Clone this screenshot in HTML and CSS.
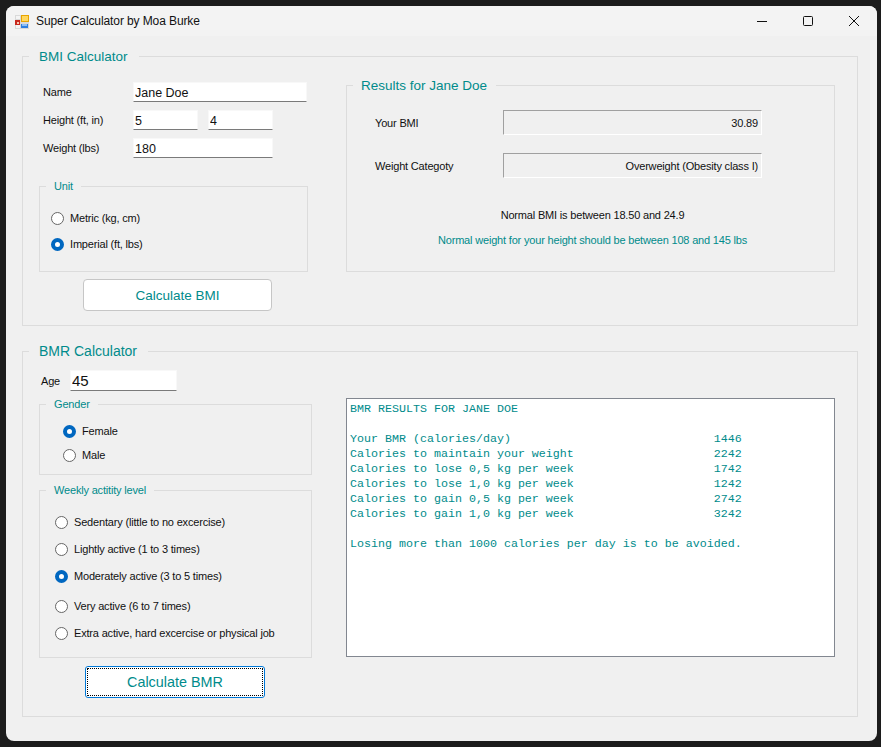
FILE: index.html
```html
<!DOCTYPE html>
<html lang="en">
<head>
<meta charset="UTF-8" />
<meta name="viewport" content="width=device-width, initial-scale=1" />
<title>Super Calculator by Moa Burke</title>
<link rel="stylesheet" href="styles.css">
</head>
<body>

<div class="window">
  <div class="titlebar">
    <svg class="app-icon" width="14" height="14" viewBox="0 0 14 14">
      <rect x="0" y="0" width="14" height="14" fill="#d9d9d9" />
      <rect x="1" y="1" width="4" height="3" fill="#f4f4f4" />
      <rect x="1" y="10" width="4" height="3" fill="#f4f4f4" />
      <rect x="0" y="5" width="5" height="5" fill="#c8281e" />
      <rect x="2" y="7" width="2" height="2" fill="#f6c7b0" />
      <rect x="6" y="0" width="8" height="7" fill="#e8a400" />
      <rect x="7" y="1" width="6" height="5" fill="#ffd75e" />
      <rect x="6" y="9" width="7" height="4" fill="#2f7fe0" />
      <rect x="7" y="9" width="5" height="2" fill="#8fc0f5" />
    </svg>
    <span class="title">Super Calculator by Moa Burke</span>
    <div class="controls">
      <span class="control">
        <svg width="10" height="10" viewBox="0 0 10 10"><path d="M0 5.5H10" stroke="#111" fill="none" /></svg>
      </span>
      <span class="control">
        <svg width="10" height="10" viewBox="0 0 10 10"><rect x="0.5" y="0.5" width="9" height="9" rx="1" stroke="#111" fill="none" /></svg>
      </span>
      <span class="control">
        <svg width="10" height="10" viewBox="0 0 10 10"><path d="M0 0L10 10M10 0L0 10" stroke="#111" stroke-width="1" fill="none" /></svg>
      </span>
    </div>
  </div>

  <div class="client">
    <fieldset class="group group-main">
      <legend>BMI Calculator</legend>
      <div class="bmi-body">
        <div class="bmi-left">
          <div class="form-row">
            <label class="form-label">Name</label>
            <input class="field field-name" value="Jane Doe" />
          </div>
          <div class="form-row">
            <label class="form-label">Height (ft, in)</label>
            <input class="field field-short" value="5" />
            <input class="field field-short" value="4" />
          </div>
          <div class="form-row">
            <label class="form-label">Weight (lbs)</label>
            <input class="field field-weight" value="180" />
          </div>

          <fieldset class="group group-unit">
            <legend>Unit</legend>
            <div class="radio-list unit-list">
              <label class="radio"><input type="radio" name="unit" />Metric (kg, cm)</label>
              <label class="radio"><input type="radio" name="unit" checked />Imperial (ft, lbs)</label>
            </div>
          </fieldset>

          <button class="btn btn-bmi">Calculate BMI</button>
        </div>

        <fieldset class="group group-results">
          <legend>Results for Jane Doe</legend>
          <div class="results-body">
            <div class="result-row">
              <span class="result-label">Your BMI</span>
              <span class="result-value">30.89</span>
            </div>
            <div class="result-row">
              <span class="result-label">Weight Categoty</span>
              <span class="result-value">Overweight (Obesity class I)</span>
            </div>
            <p class="note">Normal BMI is between 18.50 and 24.9</p>
            <p class="note note-teal">Normal weight for your height should be between 108 and 145 lbs</p>
          </div>
        </fieldset>
      </div>
    </fieldset>

    <fieldset class="group group-main group-bmr">
      <legend>BMR Calculator</legend>
      <div class="bmr-body">
        <div class="bmr-left">
          <div class="age-row">
            <label class="age-label">Age</label>
            <input class="field field-age" value="45" />
          </div>

          <fieldset class="group group-gender">
            <legend>Gender</legend>
            <div class="radio-list gender-list">
              <label class="radio"><input type="radio" name="gender" checked />Female</label>
              <label class="radio"><input type="radio" name="gender" />Male</label>
            </div>
          </fieldset>

          <fieldset class="group group-activity">
            <legend>Weekly actitity level</legend>
            <div class="radio-list activity-list">
              <label class="radio"><input type="radio" name="activity" />Sedentary (little to no excercise)</label>
              <label class="radio"><input type="radio" name="activity" />Lightly active (1 to 3 times)</label>
              <label class="radio"><input type="radio" name="activity" checked />Moderately active (3 to 5 times)</label>
              <label class="radio radio-spaced"><input type="radio" name="activity" />Very active (6 to 7 times)</label>
              <label class="radio"><input type="radio" name="activity" />Extra active, hard excercise or physical job</label>
            </div>
          </fieldset>

          <button class="btn btn-bmr">Calculate BMR</button>
        </div>

<pre class="output">BMR RESULTS FOR JANE DOE

Your BMR (calories/day)                             1446
Calories to maintain your weight                    2242
Calories to lose 0,5 kg per week                    1742
Calories to lose 1,0 kg per week                    1242
Calories to gain 0,5 kg per week                    2742
Calories to gain 1,0 kg per week                    3242

Losing more than 1000 calories per day is to be avoided.</pre>
      </div>
    </fieldset>
  </div>
</div>

</body>
</html>
```

FILE: styles.css
```css
* { box-sizing: border-box; }
html, body { margin: 0; height: 100%; }
body { background: #1c1c1c; padding: 6px 4px 6px 6px; font-family: "Liberation Sans", Arial, sans-serif; font-size: 11px; letter-spacing: -0.18px; color: #111; overflow: hidden; }

.window { width: 871px; height: 735px; background: #f0f0f0; border-radius: 8px; overflow: hidden; }

.titlebar { display: flex; align-items: center; height: 30px; background: #f3f3f3; padding-left: 9px; }
.app-icon { margin-top: 1px; }
.title { margin-left: 7px; font-size: 12px; letter-spacing: -0.1px; color: #111; }
.controls { display: flex; margin-left: auto; }
.control { display: flex; align-items: center; justify-content: center; width: 46px; height: 30px; }

.client { padding: 12px 19px 0 16px; }

.group { margin: 0; padding: 0; min-width: 0; border: 1px solid #dcdcdc; }
.group > legend { height: 15px; line-height: 15px; margin-left: 6px; padding: 0 8px; color: #008b8b; }
.group-main > legend, .group-results > legend { height: 17px; line-height: 17px; padding: 0 11px 0 10px; font-size: 13.5px; letter-spacing: 0; }
.group-results > legend { padding: 0 9px 0 8px; }
.group-bmr { margin-top: 17px; }
.group-bmr > legend { font-size: 14px; }

.bmi-body { display: flex; align-items: flex-start; gap: 38px; padding: 12px 22px 14px 16px; }
.bmi-left { width: 269px; padding-top: 5px; }

.form-row { display: flex; gap: 10px; margin-bottom: 8px; align-items: center; }
.form-label { width: 84px; padding-left: 4px; }

.field { height: 20px; padding: 1px 1px 0; border: 1px solid #f8f8f8; border-bottom-color: #7a7a7a; background: #fff; font-family: inherit; font-size: 12.5px; color: #111; outline: none; }
.field-name { width: 174px; }
.field-short { width: 65px; }
.field-weight { width: 140px; }
.field-age { width: 107px; height: 21px; padding-top: 0; font-size: 15px; }

.group-unit { margin-top: 21px; height: 93px; }
.group-gender { margin-top: 6px; height: 78px; }
.group-activity { margin-top: 8px; height: 175px; }

.radio-list { display: flex; flex-direction: column; }
.unit-list { padding: 14px 0 0 11px; gap: 6px; }
.gender-list { padding: 9px 0 0 23px; gap: 4px; }
.activity-list { padding: 14px 0 0 15px; gap: 7px; }
.radio-spaced { margin-top: 3px; }

.radio { display: flex; align-items: center; height: 20px; }
.radio input { appearance: none; width: 13px; height: 13px; margin: 0 6px 0 0; border: 1px solid #666; border-radius: 50%; background: #fff; }
.radio input:checked { border: 4px solid #0067c0; }

.btn { display: block; height: 32px; background: #fff; border: 1px solid #c6c6c6; border-radius: 4px; font-family: inherit; font-size: 13.5px; color: #008b8b; }
.btn-bmi { width: 189px; margin: 7px 0 0 44px; }
.btn-bmr { width: 180px; margin: 8px 0 0 46px; font-size: 14.4px; border-color: #0078d7; border-radius: 3px; outline: 1px dotted #000; outline-offset: -3px; }

.group-results { width: 489px; height: 195px; }
.results-body { padding: 16px 0 0 28px; }
.result-row { display: flex; align-items: center; margin-bottom: 18px; }
.result-label { width: 128px; }
.result-value { width: 259px; height: 25px; line-height: 24px; padding-right: 3px; text-align: right; border: 1px solid #fff; border-top-color: #a0a0a0; border-left-color: #a0a0a0; }
.note { margin: 0 0 9px -28px; padding-left: 4px; line-height: 16px; text-align: center; }
.note:first-of-type { margin-top: 29px; }
.note-teal { color: #008b8b; }

.bmr-body { display: flex; align-items: flex-start; gap: 34px; padding: 10px 22px 18px 16px; }
.bmr-left { width: 273px; }
.age-row { display: flex; align-items: center; gap: 10px; }
.age-label { width: 19px; margin-left: 2px; }

.output { width: 489px; height: 259px; margin: 28px 0 0 0; padding: 3px 3px 0; background: #fff; border: 1px solid #828790; font-family: "Liberation Mono", "Courier New", monospace; font-size: 11.67px; letter-spacing: 0; line-height: 15px; color: #008b8b; overflow: hidden; }
```
